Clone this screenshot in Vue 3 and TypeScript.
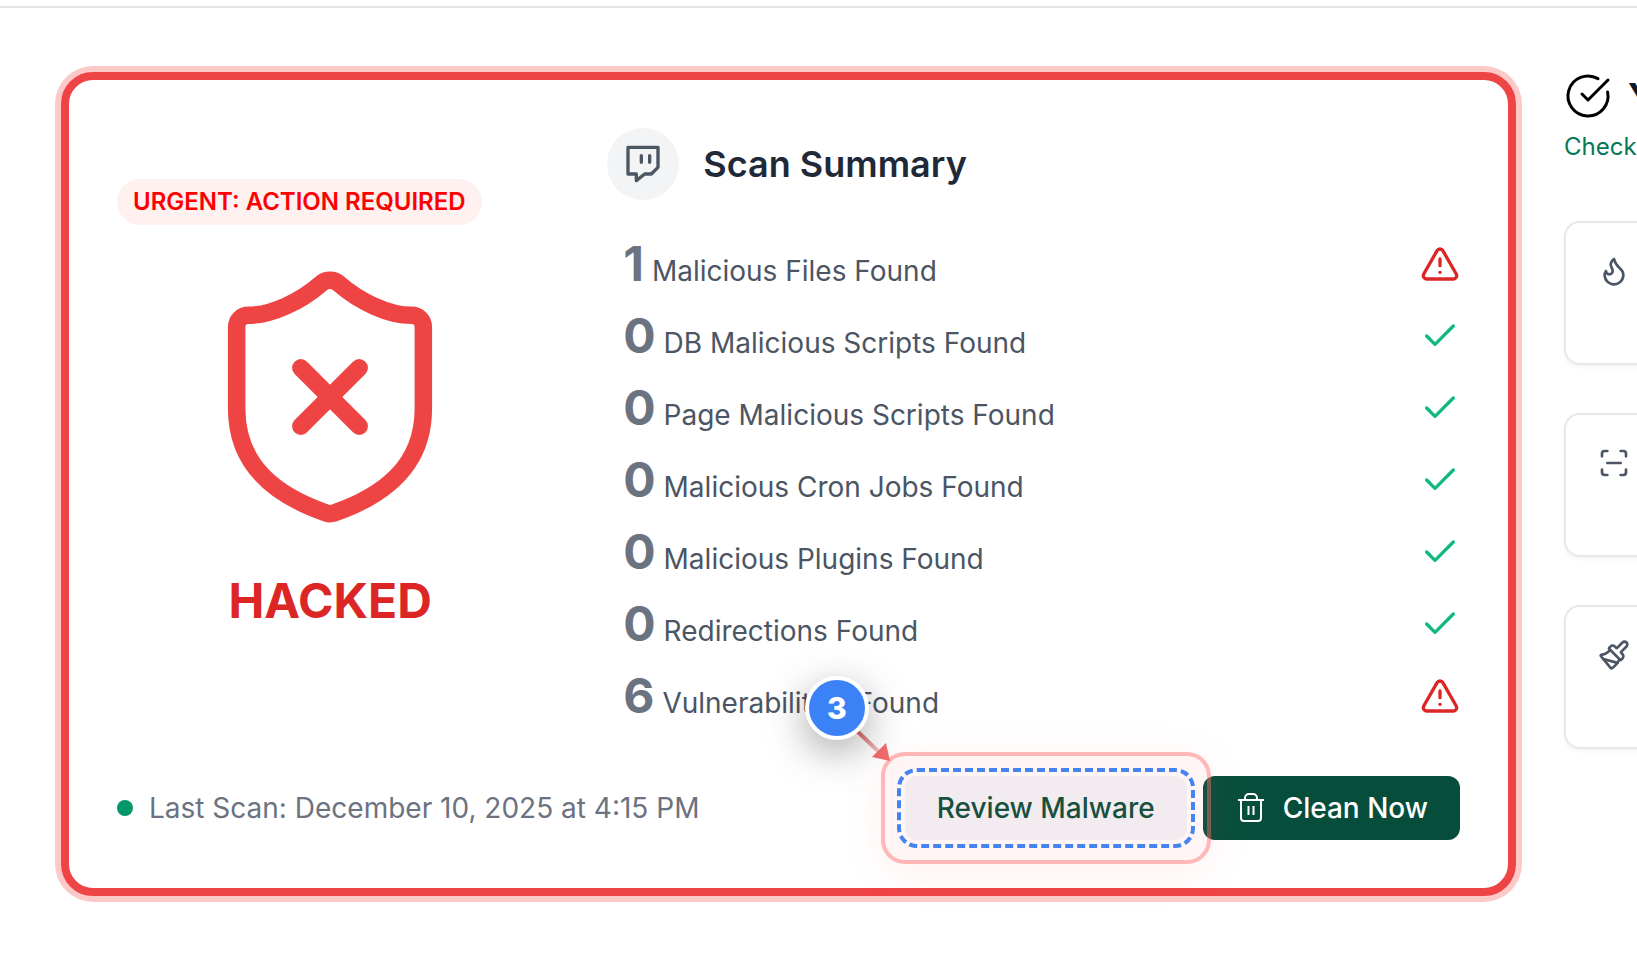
<script setup lang="ts">
interface Finding {
  count: number
  label: string
}

const findings: Finding[] = [
  { count: 1, label: 'Malicious Files Found' },
  { count: 0, label: 'DB Malicious Scripts Found' },
  { count: 0, label: 'Page Malicious Scripts Found' },
  { count: 0, label: 'Malicious Cron Jobs Found' },
  { count: 0, label: 'Malicious Plugins Found' },
  { count: 0, label: 'Redirections Found' },
  { count: 6, label: 'Vulnerabilities Found' },
]

const tools: string[][] = [
  [
    'M12 3q1 4 4 6.5t3 5.5a1 1 0 0 1-14 0 5 5 0 0 1 1-3 1 1 0 0 0 5 0c0-2-1.5-3-1.5-5q0-2 2.5-4',
  ],
  [
    'M3 7V5a2 2 0 0 1 2-2h2',
    'M17 3h2a2 2 0 0 1 2 2v2',
    'M21 17v2a2 2 0 0 1-2 2h-2',
    'M7 21H5a2 2 0 0 1-2-2v-2',
    'M7 12h10',
  ],
  [
    'm14.622 17.897-10.68-2.913',
    'M18.376 2.622a1 1 0 1 1 3.002 3.002L17.36 9.643a.5.5 0 0 0 0 .707l.944.944a2.41 2.41 0 0 1 0 3.408l-.944.944a.5.5 0 0 1-.707 0L8.354 7.348a.5.5 0 0 1 0-.707l.944-.944a2.41 2.41 0 0 1 3.408 0l.944.944a.5.5 0 0 0 .707 0z',
    'M9 8c-1.804 2.71-3.97 3.46-6.583 3.948a.507.507 0 0 0-.302.819l7.32 8.883a1 1 0 0 0 1.185.204C12.735 20.405 16 16.792 16 15',
  ],
]
</script>

<template>
  <div class="page">
    <main class="layout">
      <section class="card">
        <div class="overview">
          <div class="status">
            <span class="urgent">URGENT: ACTION REQUIRED</span>
            <svg class="shield" viewBox="0 0 24 24" aria-hidden="true">
              <path d="M20 13c0 5-3.5 7.5-7.66 8.95a1 1 0 0 1-.67-.01C7.5 20.5 4 18 4 13V6a1 1 0 0 1 1-1c2 0 4.5-1.2 6.24-2.72a1.17 1.17 0 0 1 1.52 0C14.51 3.81 17 5 19 5a1 1 0 0 1 1 1z" />
              <path d="m14.5 9.5-5 5" />
              <path d="m9.5 9.5 5 5" />
            </svg>
            <strong class="verdict">HACKED</strong>
          </div>

          <div class="summary">
            <header class="summary-head">
              <span class="summary-icon">
                <svg viewBox="0 0 24 24" aria-hidden="true">
                  <path d="M21 2H3v16h5v4l5-4h4l4-4V2zm-10 9V7m5 4V7" />
                </svg>
              </span>
              <h2>Scan Summary</h2>
            </header>
            <ul class="findings">
              <li v-for="item in findings" :key="item.label">
                <span class="label"><b>{{ item.count }}</b> {{ item.label }}</span>
                <svg v-if="item.count" class="mark alert" viewBox="0 0 24 24" aria-hidden="true">
                  <path d="m21.73 18-8-14a2 2 0 0 0-3.48 0l-8 14A2 2 0 0 0 4 21h16a2 2 0 0 0 1.73-3" />
                  <path d="M12 9v4" />
                  <path d="M12 17h.01" />
                </svg>
                <svg v-else class="mark ok" viewBox="0 0 24 24" aria-hidden="true">
                  <path d="M20 6 9 17l-5-5" />
                </svg>
              </li>
            </ul>
          </div>
        </div>

        <footer class="card-foot">
          <p class="last-scan"><span class="dot"></span>Last Scan: December 10, 2025 at 4:15 PM</p>
          <div class="actions">
            <div class="review-wrap">
              <button type="button" class="btn review">Review Malware</button>
              <div class="halo"></div>
              <div class="dashes"></div>
              <svg class="arrow" viewBox="0 0 48 48" aria-hidden="true">
                <defs>
                  <linearGradient id="arrow-fade" gradientUnits="userSpaceOnUse" x1="10" y1="12" x2="30" y2="32">
                    <stop offset="0" stop-color="#e06c6c" />
                    <stop offset="1" stop-color="#ecc4c4" />
                  </linearGradient>
                </defs>
                <path d="M8 11 30 32" stroke="url(#arrow-fade)" stroke-width="4" />
                <path d="M41 41 23 37 37 23z" fill="#f36b6b" />
              </svg>
              <span class="step">3</span>
            </div>
            <button type="button" class="btn clean">
              <svg viewBox="0 0 32 32" aria-hidden="true">
                <path d="M3 8h26M10 8V6a4 4 0 0 1 4-4h4a4 4 0 0 1 4 4v2M6 8v18a3 3 0 0 0 3 3h14a3 3 0 0 0 3-3V8M13.5 14v9M18.500 14v9" />
              </svg>
              Clean Now
            </button>
          </div>
        </footer>
      </section>

      <aside class="side">
        <header class="side-head">
          <svg viewBox="0 0 24 24" aria-hidden="true">
            <path d="M21.801 10A10 10 0 1 1 17 3.335" />
            <path d="m9 11 3 3L22 4" />
          </svg>
          <h2>Y</h2>
        </header>
        <p class="side-note">Check</p>
        <div class="tools">
          <div v-for="(paths, i) in tools" :key="i" class="tool">
            <svg viewBox="0 0 24 24" aria-hidden="true">
              <path v-for="d in paths" :key="d" :d="d" />
            </svg>
          </div>
        </div>
      </aside>
    </main>
  </div>
</template>

<style>
body {
  margin: 0;
  background: #fff;
}
</style>

<style scoped>
.page {
  box-sizing: border-box;
  margin-top: 6px;
  border-top: 2px solid #e5e5e5;
  padding: 64px 0 56px 61px;
  overflow: hidden;
  font-family: Inter, "Liberation Sans", sans-serif;
  color: #1f2937;
}
.page * {
  box-sizing: border-box;
}
svg {
  display: block;
  flex: none;
  fill: none;
  stroke: currentColor;
  stroke-width: 2;
  stroke-linecap: round;
  stroke-linejoin: round;
}
h2,
p,
ul {
  margin: 0;
  padding: 0;
}
.layout {
  display: grid;
  grid-template-columns: minmax(0, 1fr) 73px;
  gap: 48px;
}
.card {
  border: 8px solid #ef4444;
  border-radius: 32px;
  padding: 48px;
  background: #fff;
  box-shadow: 0 0 0 6px #fcc9c9;
}
.overview {
  display: grid;
  grid-template-columns: minmax(0, 1fr) minmax(0, 2fr);
  column-gap: 64px;
}
.status {
  display: flex;
  flex-direction: column;
  align-items: center;
  padding-top: 51px;
}
.urgent {
  align-self: flex-start;
  padding: 0 16px;
  border-radius: 24px;
  background: #fef1f0;
  color: #f00;
  font-size: 24px;
  font-weight: 600;
  line-height: 46px;
  white-space: nowrap;
}
.shield {
  width: 280px;
  height: 280px;
  margin-top: 32px;
  color: #ef4444;
  stroke-width: 1.5;
}
.verdict {
  margin-top: 32px;
  color: #dc2626;
  font-size: 48px;
  line-height: 64px;
}
.summary-head {
  display: flex;
  align-items: center;
  gap: 24px;
}
.summary-icon {
  display: grid;
  place-items: center;
  width: 72px;
  height: 72px;
  border-radius: 50%;
  background: #f3f4f6;
  color: #4b5563;
}
.summary-icon svg {
  width: 40px;
  height: 40px;
}
.summary-head h2 {
  font-size: 36px;
  font-weight: 600;
  line-height: 56px;
}
.findings {
  display: grid;
  gap: 8px;
  margin-top: 32px;
  padding-left: 16px;
  list-style: none;
}
.findings li {
  display: flex;
  align-items: center;
  justify-content: space-between;
  height: 64px;
}
.label {
  color: #4b5563;
  font-size: 28px;
  line-height: 40px;
}
.label b {
  color: #6b7280;
  font-size: 48px;
  line-height: 64px;
}
.mark {
  width: 40px;
  height: 40px;
}
.alert {
  color: #dc2626;
}
.ok {
  color: #10b981;
}
.card-foot {
  display: flex;
  align-items: center;
  justify-content: space-between;
  margin-top: 48px;
}
.last-scan {
  display: flex;
  align-items: center;
  gap: 16px;
  color: #6b7280;
  font-size: 28px;
  line-height: 40px;
}
.dot {
  width: 16px;
  height: 16px;
  border-radius: 50%;
  background: #059669;
}
.actions {
  display: flex;
  gap: 16px;
}
.btn {
  display: flex;
  align-items: center;
  gap: 16px;
  height: 64px;
  border: 0;
  border-radius: 12px;
  padding: 0 32px;
  font-family: inherit;
  font-size: 28px;
  font-weight: 500;
  line-height: 40px;
  white-space: nowrap;
}
.review {
  background: #f1f5f9;
  color: #064e3b;
}
.clean {
  background: #064e3b;
  color: #fff;
}
.clean svg {
  width: 32px;
  height: 32px;
  stroke-linecap: butt;
}
.review-wrap {
  position: relative;
  z-index: 1;
}
.halo,
.dashes {
  position: absolute;
  pointer-events: none;
}
.halo {
  inset: -24px;
  border: 4px solid rgba(255, 107, 107, 0.45);
  border-radius: 24px;
  background: rgba(255, 107, 107, 0.07);
  box-shadow: 0 8px 40px rgba(255, 107, 107, 0.1);
}
.dashes {
  inset: -8px;
  border: 4px dashed #4583f0;
  border-radius: 20px;
}
.arrow {
  position: absolute;
  left: -56px;
  top: -56px;
  width: 48px;
  height: 48px;
  stroke: none;
}
.step {
  position: absolute;
  left: -100px;
  top: -100px;
  width: 64px;
  height: 64px;
  border: 4px solid #fff;
  border-radius: 50%;
  background: #3b82f6;
  box-shadow: 0 12px 40px rgba(0, 0, 0, 0.35);
  color: #fff;
  font-size: 30px;
  font-weight: 800;
  line-height: 56px;
  text-align: center;
}
.side-head {
  display: flex;
  align-items: center;
  gap: 16px;
  height: 48px;
}
.side-head svg {
  width: 48px;
  height: 48px;
  color: #000;
  stroke-width: 1.5;
}
.side-head h2 {
  color: #0f172a;
  font-size: 36px;
  font-weight: 700;
}
.side-note {
  margin-top: 8px;
  color: #047857;
  font-size: 24px;
  line-height: 38px;
}
.tools {
  display: grid;
  gap: 48px;
  width: 480px;
  margin-top: 55px;
}
.tool {
  height: 144px;
  border: 2px solid #e5e7eb;
  border-radius: 16px;
  padding: 32px;
  box-shadow: 0 2px 4px rgba(0, 0, 0, 0.05);
  color: #4b5563;
}
.tool svg {
  width: 32px;
  height: 32px;
}
</style>
